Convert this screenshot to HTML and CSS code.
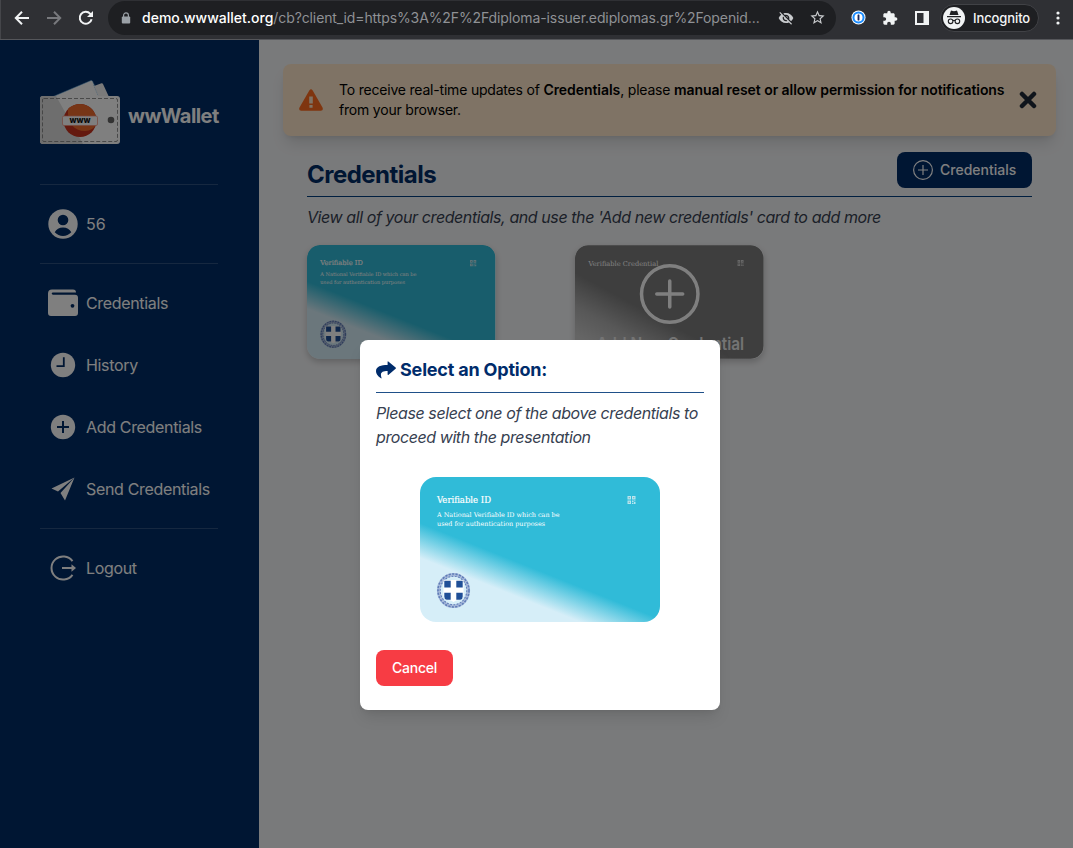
FILE: index.html
```html
<!DOCTYPE html>
<html lang="en">
<head>
<meta charset="utf-8">
<title>wwWallet</title>
<link rel="stylesheet" href="styles.css">
</head>
<body>
<svg class="defs" aria-hidden="true">
  <defs>
    <linearGradient id="cyan" gradientUnits="userSpaceOnUse" x1="0" y1="46" x2="-12" y2="76">
      <stop offset="0" stop-color="#30bbd8"/><stop offset="1" stop-color="#d6eef8"/>
    </linearGradient>
    <linearGradient id="gray" gradientUnits="userSpaceOnUse" x1="20" y1="38" x2="-6" y2="86">
      <stop offset="0" stop-color="#7c7c7c"/><stop offset=".55" stop-color="#b0b0b0"/><stop offset="1" stop-color="#cacaca"/>
    </linearGradient>
    <g id="qr" fill="#fff" opacity=".65">
      <path d="M0 0h3.5v3.5H0zM4.5 0H8v3.5H4.5zM0 4.5h3.5V8H0zM4.5 4.5h1.5V6H4.500zM6.500 6H8v2H6.500zM4.500 6.800H6V8H4.500zM6.500 4.500H8v.8H6.500z"/>
      <path fill="#888" d="M1.200 1.200h1.100v1.100H1.200zM5.700 1.200h1.100v1.100H5.700zM1.200 5.700h1.100v1.100H1.200z"/>
    </g>
    <symbol id="id-card" viewBox="0 0 240 145">
      <rect width="240" height="145" rx="16" fill="url(#cyan)"/>
      <text class="slab slab-title" x="17" y="26" textLength="54" lengthAdjust="spacingAndGlyphs">Verifiable ID</text>
      <text class="slab slab-note" x="17" y="40" textLength="122.500" lengthAdjust="spacingAndGlyphs">A National Verifiable ID which can be</text>
      <text class="slab slab-note" x="17" y="49.300" textLength="108" lengthAdjust="spacingAndGlyphs">used for authentication purposes</text>
      <use href="#qr" x="207.500" y="19"/>
      <g fill="none" stroke="#5f7db8">
        <ellipse cx="33.500" cy="113.500" rx="14.800" ry="15.800" stroke-width="3.600" stroke="#a9bbdb"/>
        <ellipse cx="33.500" cy="113.500" rx="15.500" ry="16.500" stroke-width="1.600" stroke-dasharray="2.200 1.300"/>
        <ellipse cx="33.500" cy="113.500" rx="13.300" ry="14.300" stroke-width="1.100" stroke-dasharray="1.800 1.500"/>
      </g>
      <path fill="#fff" d="M23.500 103h20v15q0 4-4 5-4 0-6 2-2-2-6-2-4-1-4-5z"/>
      <path fill="#1f4f97" d="M24.300 103.800h6.400v6.700h-6.400zM36.300 103.800h6.400v6.700h-6.400zM24.300 115.700h6.400v7.100h-4q-2.400-.5-2.400-3zM36.300 115.700h6.400v4.100q0 2.500-2.400 3h-4z"/>
    </symbol>
  </defs>
</svg>

<header class="toolbar">
  <svg class="tool back" viewBox="0 0 16 16"><path d="M15 8H2M8 1.800 1.800 8 8 14.200"/></svg>
  <svg class="tool forward" viewBox="0 0 16 16"><path d="M1 8h13M8 1.800 14.200 8 8 14.200"/></svg>
  <svg class="tool reload" viewBox="0 0 16 16"><path d="M13.600 9.200A6 6 0 1 1 12.300 3.800L13.500 5"/><path class="solid" d="M15 1v6H9z"/></svg>
  <div class="address">
    <svg class="lock" viewBox="0 0 10 12"><path d="M2.600 5V3.300a2.400 2.400 0 0 1 4.800 0V5" fill="none" stroke="#9aa0a6" stroke-width="1.200"/><rect x=".8" y="4.500" width="8.400" height="7" rx="1" fill="#9aa0a6"/></svg>
    <span class="url"><b>demo.wwwallet.org</b>/cb?client_id=https%3A%2F%2Fdiploma-issuer.ediplomas.gr%2Fopenid...</span>
    <svg class="eye" viewBox="0 0 24 24"><path fill="#c9cbce" d="M12 7c2.760 0 5 2.240 5 5 0 .65-.13 1.260-.36 1.830l2.920 2.920c1.510-1.260 2.700-2.890 3.430-4.750-1.730-4.390-6-7.500-11-7.500-1.400 0-2.740.25-3.980.7l2.160 2.160C10.740 7.130 11.350 7 12 7zM2 4.270l2.280 2.280.46.46C3.080 8.300 1.780 10.020 1 12c1.730 4.390 6 7.500 11 7.500 1.550 0 3.030-.3 4.380-.84l.42.42L19.730 22 21 20.730 3.270 3 2 4.270zM7.530 9.800l1.550 1.550c-.05.21-.08.43-.08.65 0 1.660 1.340 3 3 3 .22 0 .44-.03.65-.08l1.550 1.550c-.67.33-1.410.53-2.200.53-2.760 0-5-2.240-5-5 0-.79.2-1.530.53-2.200zm4.310-.78l3.150 3.150.02-.16c0-1.660-1.340-3-3-3l-.17.01z"/></svg>
    <svg class="star" viewBox="0 0 24 24"><path fill="#c9cbce" d="M22 9.240l-7.190-.62L12 2 9.190 8.630 2 9.240l5.460 4.730L5.820 21 12 17.270 18.180 21l-1.630-7.030L22 9.240zM12 15.400l-3.760 2.270 1-4.280-3.320-2.880 4.380-.38L12 6.100l1.710 4.040 4.380.38-3.320 2.880 1 4.280L12 15.400z"/></svg>
  </div>
  <svg class="onepass" viewBox="0 0 16 16"><circle cx="8" cy="8" r="7.500" fill="#fff"/><circle cx="8" cy="8" r="5.400" fill="#fff" stroke="#1a8cff" stroke-width="2.200"/><rect x="7" y="4.800" width="2" height="6.400" rx=".5" fill="#1a285f"/></svg>
  <svg class="puzzle" viewBox="0 0 24 24"><path fill="#f1f3f4" d="M20.500 11H19V7c0-1.100-.9-2-2-2h-4V3.500C13 2.120 11.880 1 10.500 1S8 2.120 8 3.500V5H4c-1.100 0-1.990.9-1.990 2v3.800H3.500c1.490 0 2.700 1.210 2.700 2.700s-1.210 2.700-2.700 2.700H2V20c0 1.100.9 2 2 2h3.800v-1.500c0-1.490 1.210-2.700 2.700-2.700 1.490 0 2.700 1.210 2.700 2.700V22H17c1.100 0 2-.9 2-2v-4h1.500c1.380 0 2.500-1.120 2.500-2.500S21.880 11 20.500 11z"/></svg>
  <svg class="panel" viewBox="0 0 14 14"><path fill="#f1f3f4" fill-rule="evenodd" d="M0 0h14v14H0zM2 2v10h6.500V2z"/></svg>
  <div class="incognito">
    <svg viewBox="0 0 22 22"><circle cx="11" cy="11" r="11" fill="#f1f3f4"/><g fill="#202124"><path d="M4 9h14v1.200H4zM6.500 8l1.200-3.800q.3-.8 1.100-.5l2.200.6 2.200-.6q.8-.3 1.100.5L15.500 8z"/></g><g fill="none" stroke="#202124" stroke-width="1.100"><circle cx="7.600" cy="14.300" r="2.300"/><circle cx="14.400" cy="14.300" r="2.300"/><path d="M9.800 13.800q1.200-.8 2.400 0"/></g></svg>
    <span>Incognito</span>
  </div>
  <svg class="dots" viewBox="0 0 4 14"><g fill="#f1f3f4"><circle cx="2" cy="2" r="1.600"/><circle cx="2" cy="7" r="1.600"/><circle cx="2" cy="12" r="1.600"/></g></svg>
</header>

<div class="app">
  <aside class="sidebar">
    <div class="brand">
      <svg class="logo" viewBox="0 0 80 64">
        <path fill="#fff" stroke="#5fa8dc" stroke-width=".5" d="M12 17 51 .5q1-.3 1.500.7L60 17z"/>
        <path fill="#f4f4f4" d="m54 6 7.500-2.800q1-.3 1.500.7L69 17H59z"/>
        <path fill="none" stroke="#5fa8dc" stroke-width=".5" stroke-dasharray="1 1" d="m53.500 5 5 12"/>
        <rect y="16" width="80" height="48" rx="3" fill="#fff"/>
        <path fill="#dcdcdc" d="M3 16h13l27 48H3q-3 0-3-3V19q0-3 3-3z"/>
        <rect x="2.500" y="18.500" width="75" height="43" rx="1.500" fill="none" stroke="#777" stroke-width=".8" stroke-dasharray="4 2"/>
        <circle cx="40" cy="40.500" r="16.500" fill="#c8321e"/>
        <path fill="#ef6a2c" d="M28 29a16.500 16.500 0 0 1 28 15c-1 4-6 7-11 7-11 0-18-8-17-22z"/>
        <rect x="22.500" y="36" width="35" height="9.500" rx="1.500" fill="#fff" stroke="#ef8c78" stroke-width=".7"/>
        <text class="logo-text" x="40" y="43.400" text-anchor="middle" textLength="21" lengthAdjust="spacingAndGlyphs">www</text>
        <circle cx="71" cy="40" r="3.300" fill="#666"/>
      </svg>
      <span>wwWallet</span>
    </div>
    <div class="user row">
      <svg class="i30" viewBox="0 0 30 30"><circle cx="15" cy="15" r="14.700" fill="#fff"/><circle cx="15" cy="11" r="5.300" fill="#002c66"/><path fill="#002c66" d="M6.700 23.300q2.500-4.700 8.300-4.700t8.300 4.700q-3.500 3.600-8.300 3.600t-8.300-3.600z"/></svg>
      <span>56</span>
    </div>
    <nav>
      <a class="row"><svg class="i30" viewBox="0 0 30 28"><path fill="#fff" d="M4 .5h21q3 0 3 3H5q-1.300 0-1.300 1T5 5.700h22q3 0 3 3V24q0 3-3 3H3q-3 0-3-3V4.500q0-4 4-4z"/><circle cx="24.500" cy="16.800" r="1.900" fill="#002c66"/></svg><span>Credentials</span></a>
      <a class="row"><svg class="i30" viewBox="0 0 30 30"><circle cx="15" cy="15" r="12.200" fill="#fff"/><path fill="none" stroke="#002c66" stroke-width="1.800" d="M15.800 7.200v9H8.500"/></svg><span>History</span></a>
      <a class="row"><svg class="i30" viewBox="0 0 30 30"><circle cx="15" cy="15" r="12.200" fill="#fff"/><path fill="none" stroke="#002c66" stroke-width="2" d="M15 9v12M9 15h12"/></svg><span>Add Credentials</span></a>
      <a class="row"><svg class="i30" viewBox="0 0 30 30"><path fill="#fff" d="M26.500 3.500 3.500 14.500l6.500 3.100zM26.500 3.500 17 26.500l-4.500-7.400z"/></svg><span>Send Credentials</span></a>
    </nav>
    <div class="row logout">
      <svg class="i30" viewBox="0 0 30 30"><path fill="none" stroke="#fff" stroke-width="2" d="M24.500 8.200a11.600 11.600 0 1 0 0 13.600M14 15h10"/><path fill="#fff" d="m23.500 11.200 4.500 3.800-4.500 3.800z"/></svg>
      <span>Logout</span>
    </div>
  </aside>

  <main>
    <div class="notice">
      <svg class="warn" viewBox="0 0 24 22"><path fill="#ff6a1e" d="M10.300 1.500q1.700-2.500 3.400 0l9.800 17q1.200 3-1.700 3.300H2.200Q-.7 21.500.5 18.500z"/><path fill="#ffe7ca" d="M10.200 7.500h3.600v7h-3.600zM10.400 16h3.200v2.700h-3.200z"/></svg>
      <p>To receive real-time updates of <b>Credentials</b>, please <b class="nowrap">manual reset or allow permission for notifications</b> from your browser.</p>
      <svg class="close" viewBox="0 0 18 18"><path d="m3 3 12 12M15 3 3 15"/></svg>
    </div>
    <section class="content">
      <div class="heading">
        <h1>Credentials</h1>
        <button class="add"><svg viewBox="0 0 20 20"><circle cx="10" cy="10" r="9.400"/><path d="M10 5v10M5 10h10"/></svg><span>Credentials</span></button>
      </div>
      <p class="lead">View all of your credentials, and use the 'Add new credentials' card to add more</p>
      <div class="cards">
        <svg class="card"><use href="#id-card"/></svg>
        <svg class="card" viewBox="0 0 189 114">
          <rect width="189" height="114" rx="13" fill="url(#gray)"/>
          <text class="slab slab-new" x="13.500" y="20.500" textLength="70" lengthAdjust="spacingAndGlyphs">Verifiable Credential</text>
          <use href="#qr" transform="translate(163 15) scale(.75)"/>
          <g fill="none" stroke="#fff"><circle cx="95" cy="49" r="28.300" stroke-width="3.500"/><path stroke-width="3.500" stroke-linecap="round" d="M95 36v26M82 49h26"/></g>
          <text class="new-label" x="95.500" y="105" text-anchor="middle" textLength="148" lengthAdjust="spacingAndGlyphs">Add New Credential</text>
        </svg>
      </div>
    </section>
  </main>

  <div class="backdrop">
    <div class="modal">
      <h2><svg viewBox="0 0 20 18"><path fill="#002c6b" d="M11.600 1.100q0-1.300 1-.4l7 5.900q.7.600 0 1.200l-7 5.900q-1 .8-1-.5v-3.100C6 10.100 3.800 11.800 5.500 16.700q.2 1.200-.9.400Q0 13.700 0 10.200C0 5.500 5 4.200 11.600 4.100z"/></svg><span>Select an Option:</span></h2>
      <p>Please select one of the above credentials to proceed with the presentation</p>
      <svg class="choice"><use href="#id-card"/></svg>
      <button class="cancel">Cancel</button>
    </div>
  </div>
</div>
</body>
</html>
```

FILE: styles.css
```css
* { box-sizing: border-box; }
body {
  margin: 0;
  width: 1073px;
  height: 848px;
  overflow: hidden;
  display: flex;
  flex-direction: column;
  font-family: Inter, "Liberation Sans", sans-serif;
  font-size: 16px;
  line-height: 24px;
}
h1, h2, p { margin: 0; }
svg { display: block; flex: none; }
button { border: 0; font: inherit; color: #fff; }
.defs { width: 0; height: 0; position: absolute; }

/* browser toolbar */
.toolbar {
  height: 40px;
  flex: none;
  display: flex;
  align-items: center;
  padding: 0 12px 4px 14px;
  background: #2f3034;
  border-bottom: 1px solid #55565a;
  box-shadow: inset 1px 0 #45464a;
}
.tool { width: 16px; height: 16px; margin-right: 16px; fill: none; stroke: #f1f3f4; stroke-width: 2; }
.tool.forward { stroke: #78797d; }
.tool.reload { margin-right: 14px; }
.tool .solid { fill: #f1f3f4; stroke: none; }
.address {
  width: 728px;
  height: 34px;
  padding: 0 10px 0 13px;
  display: flex;
  align-items: center;
  border-radius: 17px;
  background: #1e1f22;
}
.lock { width: 10px; height: 12px; margin-right: 11px; }
.url { width: 636px; font-size: 14px; letter-spacing: -.11px; color: #8f9195; white-space: nowrap; }
.url b { font-weight: 500; letter-spacing: 0; color: #fff; }
.eye { width: 16px; height: 16px; margin-right: 15px; }
.star { width: 17px; height: 17px; }
.onepass { width: 15px; height: 15px; margin-left: 15px; }
.puzzle { width: 16px; height: 16px; margin-left: 16px; }
.panel { width: 14px; height: 14px; margin-left: 17px; }
.incognito {
  width: 99px;
  height: 28px;
  margin-left: 11px;
  padding-left: 2px;
  display: flex;
  align-items: center;
  gap: 8px;
  border-radius: 14px;
  border: 1px solid #414246;
  background: #1e1f22;
  color: #f4f5f6;
  font-size: 13px;
  font-weight: 500;
  letter-spacing: -.1px;
}
.incognito svg { width: 22px; height: 22px; }
.dots { width: 4px; height: 14px; margin-left: 17px; }

/* application */
.app { flex: 1; display: flex; position: relative; background: #f3f4f6; }
.sidebar { width: 259px; padding: 40px 41px 0 40px; background: #002c66; color: #fff; }
.brand { height: 64px; display: flex; align-items: center; gap: 8px; font-size: 20px; font-weight: 700; letter-spacing: -.58px; }
.brand span { padding-top: 8px; }
.logo { width: 80px; height: 64px; }
.logo-text { font: 800 8px Inter, sans-serif; letter-spacing: 0; fill: #111; }
.row { height: 62px; padding-left: 8px; display: flex; align-items: center; gap: 8px; letter-spacing: -.33px; }
.i30 { width: 30px; height: 30px; }
.user { height: 80px; margin-top: 40px; border: 1px solid #2c5080; border-width: 1px 0; letter-spacing: -.1px; }
nav { padding: 8px 0; border-bottom: 1px solid #2c5080; }
.logout { margin-top: 8px; }

main { flex: 1; padding: 24px 17px 0 24px; }
.notice {
  height: 72px;
  padding: 0 19px 0 16px;
  display: flex;
  align-items: center;
  border-radius: 8px;
  background: #ffe7ca;
  box-shadow: 0 10px 15px -3px rgba(0, 0, 0, .12), 0 4px 6px -4px rgba(0, 0, 0, .12);
  font-size: 14px;
  line-height: 20px;
  color: #000;
}
.notice p { width: 680px; letter-spacing: -.2px; }
.notice b { font-weight: 600; letter-spacing: -.06px; }
.nowrap { white-space: nowrap; }
.warn { width: 24px; height: 22px; margin-right: 16px; }
.close { width: 18px; height: 18px; fill: none; stroke: #1f2937; stroke-width: 4.500; stroke-linecap: round; }
.content { padding: 16px 24px 0; }
.heading { height: 45px; display: flex; justify-content: space-between; align-items: flex-start; border-bottom: 1px solid #003f80; }
h1 { padding-top: 7px; font-size: 24px; line-height: 32px; font-weight: 700; color: #002c66; letter-spacing: -.52px; }
.add { width: 135px; height: 36px; padding: 0 16px; display: flex; align-items: center; gap: 7px; border-radius: 8px; background: #002c66; font-size: 14px; font-weight: 500; }
.add svg { width: 20px; height: 20px; fill: none; stroke: #fff; stroke-width: 1.200; }
.lead { padding: 8px 0 16px; font-style: italic; letter-spacing: -.415px; color: #374151; white-space: nowrap; }
.cards { display: flex; gap: 79.500px; }
.card { width: 188.500px; height: 114px; border-radius: 13px; box-shadow: 0 3px 6px rgba(0, 0, 0, .2); }
.slab { font-family: "DejaVu Serif", serif; fill: #fff; }
.slab-title { font-size: 8.600px; font-weight: 500; stroke: #fff; stroke-width: .2; }
.slab-note { font-size: 6.500px; }
.slab-new { font-size: 6.800px; }
.new-label { font: 600 17px Inter, sans-serif; fill: #e8e8e8; }

/* dialog */
.backdrop { position: absolute; inset: 0; padding: 300px 0 0 360px; background: rgba(0, 0, 0, .5); }
.modal { width: 360px; height: 370px; padding: 16px; border-radius: 8px; background: #fff; box-shadow: 0 10px 15px -3px rgba(0, 0, 0, .1), 0 4px 6px -4px rgba(0, 0, 0, .1); }
h2 { height: 37px; padding-bottom: 9px; display: flex; align-items: center; gap: 4px; border-bottom: 1px solid #1f5089; font-size: 18px; line-height: 28px; font-weight: 700; letter-spacing: -.19px; color: #002c6b; }
h2 svg { width: 20px; height: 18px; }
.modal p { padding-top: 8px; font-style: italic; letter-spacing: -.415px; color: #374151; }
.choice { width: 240px; height: 145px; margin: 28px auto; }
.cancel { width: 77px; height: 36px; padding: 0; border-radius: 8px; background: #f73c44; font-size: 14px; font-weight: 500; letter-spacing: -.25px; }
```
